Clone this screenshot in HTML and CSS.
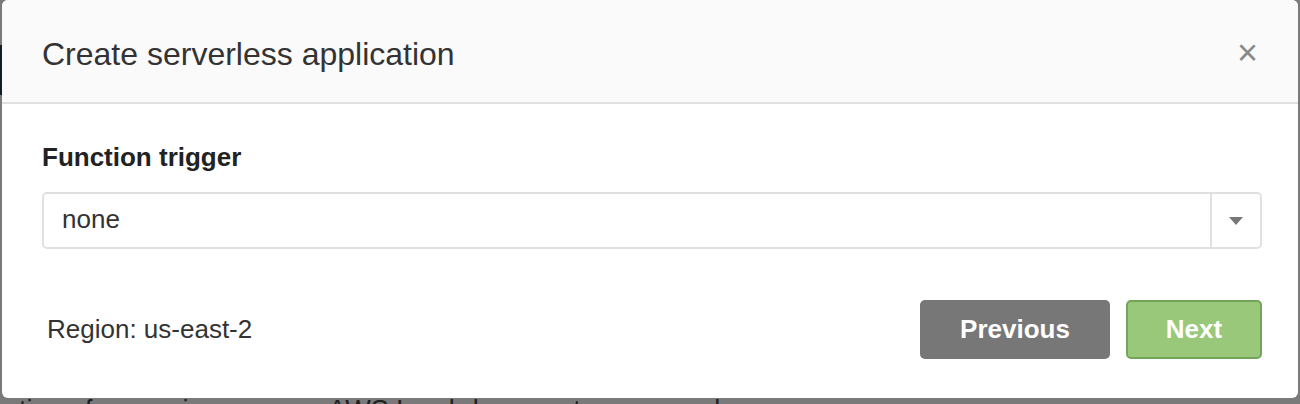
FILE: index.html
```html
<!DOCTYPE html>
<html>
<head>
<meta charset="utf-8">
<link rel="stylesheet" href="styles.css">
</head>
<body>
<div class="page">
  <div class="page-nav"></div>
  <p class="page-text">ation of managing servers. AWS Lambda executes your code</p>
</div>
<div class="modal">
  <div class="modal-header">
    <h1 class="modal-title">Create serverless application</h1>
    <span class="modal-close">&times;</span>
  </div>
  <div class="modal-body">
    <label class="field-label">Function trigger</label>
    <div class="select">
      <span class="select-value">none</span>
      <span class="select-arrow"><span class="caret"></span></span>
    </div>
  </div>
  <div class="modal-footer">
    <span class="region">Region: us-east-2</span>
    <div class="actions">
      <button class="btn btn-prev">Previous</button>
      <button class="btn btn-next">Next</button>
    </div>
  </div>
</div>
</body>
</html>
```
FILE: styles.css
```css
html, body {
  margin: 0;
  padding: 0;
}
body {
  width: 1300px;
  height: 404px;
  overflow: hidden;
  background: #7a7a7a;
  font-family: "Liberation Sans", Arial, sans-serif;
  position: relative;
}
.page {
  height: 404px;
  display: flex;
  flex-direction: column;
  overflow: hidden;
}
.page-nav {
  margin-top: 45px;
  width: 2px;
  height: 50px;
  flex-shrink: 0;
  background: #141c28;
}
.page-text {
  flex-shrink: 0;
  margin: 300px 0 0 4px;
  font-size: 27px;
  line-height: 30px;
  color: #1f1f1f;
  white-space: nowrap;
}
.modal {
  position: absolute;
  left: 2px;
  top: 0;
  width: 1296px;
  height: 398px;
  background: #fff;
  border-radius: 6px;
  display: flex;
  flex-direction: column;
  overflow: hidden;
}
.modal-header {
  height: 102px;
  background: #fafafa;
  border-bottom: 2px solid #e0e0e0;
  display: flex;
  align-items: center;
  justify-content: space-between;
  padding: 0 40px;
  flex-shrink: 0;
}
.modal-title {
  margin: 0;
  font-size: 32px;
  font-weight: normal;
  color: #333;
  padding-top: 6px;
}
.modal-close {
  font-size: 36px;
  color: #8a8a8a;
  line-height: 1;
  padding-top: 4px;
}
.modal-body {
  padding: 38px 36px 0 40px;
  display: flex;
  flex-direction: column;
}
.field-label {
  font-size: 26px;
  font-weight: bold;
  color: #222;
  line-height: 30px;
}
.select {
  margin-top: 20px;
  height: 53px;
  border: 2px solid #e0e0e0;
  border-radius: 5px;
  display: flex;
  align-items: center;
}
.select-value {
  flex: 1;
  padding-left: 18px;
  font-size: 26px;
  color: #333;
  padding-bottom: 2px;
}
.select-arrow {
  width: 48px;
  height: 100%;
  border-left: 2px solid #e0e0e0;
  display: flex;
  align-items: center;
  justify-content: center;
}
.caret {
  width: 0;
  height: 0;
  border-left: 7px solid transparent;
  border-right: 7px solid transparent;
  border-top: 8px solid #777;
}
.modal-footer {
  padding: 0 36px 0 45px;
  margin-top: 51px;
  display: flex;
  align-items: center;
  justify-content: space-between;
}
.region {
  font-size: 26px;
  color: #333;
}
.actions {
  display: flex;
  gap: 16px;
}
.btn {
  height: 59px;
  border-radius: 5px;
  font-family: "Liberation Sans", Arial, sans-serif;
  font-size: 26px;
  font-weight: bold;
  color: #fff;
  cursor: pointer;
  padding: 0;
}
.btn-prev {
  width: 190px;
  background: #777;
  border: none;
}
.btn-next {
  width: 136px;
  background: #99c87a;
  border: 2px solid #72a45a;
}
```
